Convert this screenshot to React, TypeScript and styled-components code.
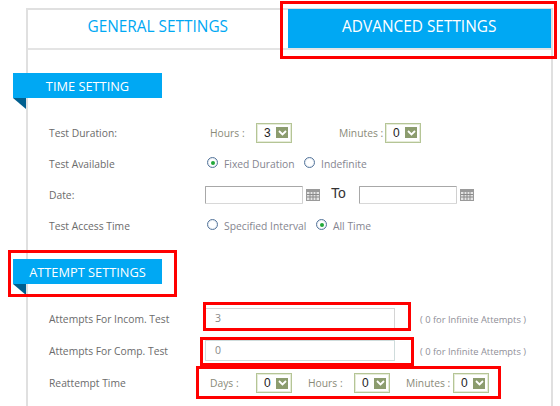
import React from "react";
import styled, { createGlobalStyle } from "styled-components";

const Global = createGlobalStyle`
  html, body { margin: 0; padding: 0; background: #fff; height: 406px; overflow: hidden; }
  body { font-family: "Open Sans", "Liberation Sans", sans-serif; color: #666; }
`;

const Page = styled.div`
  position: relative;
  width: 560px;
  height: 406px;
  overflow: hidden;
  padding: 8px 7px 0 26px;
  box-sizing: border-box;
`;
const Panel = styled.div`
  height: 398px;
  border: solid #e0e0e0;
  border-width: 2px 2px 0 2px;
  box-sizing: border-box;
`;
const Tabs = styled.div`
  display: flex;
  height: 39px;
  margin-top: -1px;
  border-bottom: 2px solid #e4e4e4;
`;
const Tab = styled.div<{ $active?: boolean }>`
  display: flex;
  align-items: center;
  justify-content: center;
  font-size: 15.4px;
  height: 39px;
  padding-bottom: 5px;
  box-sizing: border-box;
  width: ${(p) => (p.$active ? "264px" : "260px")};
  background: ${(p) => (p.$active ? "#00a8f3" : "transparent")};
  color: ${(p) => (p.$active ? "#fff" : "#00a8f3")};
`;
const Banner = styled.div<{ $top: number }>`
  position: relative;
  width: 149px;
  height: 25px;
  margin: ${(p) => p.$top}px 0 0 -15px;
  background: #00a8f3;
  color: #fff;
  font-size: 12.8px;
  display: flex;
  align-items: center;
  justify-content: center;
  &::after {
    content: "";
    position: absolute;
    left: 0;
    top: 25px;
    border-style: solid;
    border-width: 0 13px 11px 0;
    border-color: transparent #005f8f transparent transparent;
  }
`;
const Rows = styled.div<{ $top: number }>`
  margin-top: ${(p) => p.$top}px;
  display: flex;
  flex-direction: column;
`;
const Row = styled.div<{ $h?: number }>`
  display: flex;
  align-items: center;
  height: ${(p) => p.$h ?? 31}px;
  font-size: 10.3px;
  white-space: nowrap;
`;
const Label = styled.div`
  width: 156px;
  margin-left: 21px;
  flex: none;
  color: #6b6b6b;
`;
const Caption = styled.span<{ $w: number; $ml?: number }>`
  width: ${(p) => p.$w}px;
  margin-left: ${(p) => p.$ml ?? 0}px;
  flex: none;
  color: #8a8a78;
`;
const SelectBox = styled.div<{ $mr?: number }>`
  width: 36px;
  height: 20px;
  box-sizing: border-box;
  border: 1px solid #b5c596;
  outline: 1px solid #e6ecd9;
  outline-offset: -2px;
  display: flex;
  align-items: center;
  justify-content: space-between;
  padding: 0 3px 0 7px;
  margin-right: ${(p) => p.$mr ?? 0}px;
  color: #222;
  font-family: "Liberation Sans", sans-serif;
  font-size: 12px;
  flex: none;
`;
const Arrow = styled.span`
  width: 12px;
  height: 11px;
  background: #8c9c6e;
  display: flex;
  align-items: center;
  justify-content: center;
`;
const RadioWrap = styled.label<{ $w: number }>`
  display: flex;
  align-items: center;
  width: ${(p) => p.$w}px;
  flex: none;
  color: #85858f;
  gap: 6px;
`;
const RadioDot = styled.span<{ $on?: boolean }>`
  width: 11px;
  height: 11px;
  box-sizing: border-box;
  border-radius: 50%;
  border: 1px solid #54749a;
  background: #fff;
  box-shadow: inset 0 0 0 1px #e8eef4;
  margin: -2px 0 0 2px;
  flex: none;
  position: relative;
  &::after {
    content: "";
    display: ${(p) => (p.$on ? "block" : "none")};
    position: absolute;
    left: 2.5px;
    top: 2.5px;
    width: 4px;
    height: 4px;
    border-radius: 50%;
    background: #22a83a;
  }
`;
const DateInput = styled.div`
  width: 98px;
  height: 18px;
  box-sizing: border-box;
  border: 1px solid #a8a8a8;
  border-bottom-color: #d8d8d8;
  border-right-color: #d0d0d0;
  border-radius: 1px;
  flex: none;
`;
const CalendarSlot = styled.span`
  display: flex;
  margin-left: 3px;
  margin-top: 1px;
  flex: none;
`;
const ToText = styled.span`
  font-family: "Liberation Sans", sans-serif;
  font-size: 14px;
  color: #333;
  margin: -4px 13px 0 11px;
  flex: none;
`;
const TextField = styled.div<{ $tint?: boolean }>`
  width: 190px;
  height: 21px;
  box-sizing: border-box;
  border: 1px solid ${(p) => (p.$tint ? "#cfdcdc" : "#d4d4d4")};
  color: #888;
  font-size: 10.5px;
  padding-left: 9px;
  margin-top: -2px;
  display: flex;
  align-items: center;
  margin-right: 25px;
  flex: none;
`;
const Hint = styled.span`
  font-size: 9.35px;
  color: #8f8f98;
`;
const Highlight = styled.div<{ $x: number; $y: number; $w: number; $h: number }>`
  position: absolute;
  left: ${(p) => p.$x}px;
  top: ${(p) => p.$y}px;
  width: ${(p) => p.$w}px;
  height: ${(p) => p.$h}px;
  border: 3px solid #f00;
  box-sizing: border-box;
  pointer-events: none;
`;

const Chevron = () => (
  <svg width="9" height="6" viewBox="0 0 9 6">
    <path d="M1 1 L4.5 4.5 L8 1" fill="none" stroke="#fff" strokeWidth="1.8" />
  </svg>
);
const Calendar = () => (
  <svg width="14" height="12" viewBox="0 0 14 12">
    <rect x="0" y="0" width="14" height="12" fill="#9a9a9a" />
    <rect x="1" y="3" width="12" height="8" fill="#e4e4e4" />
    <path d="M4 3v8M7 3v8M10 3v8M1 5.5h12M1 8h12" stroke="#8a8a8a" strokeWidth="1" />
  </svg>
);
const Select = ({ value, mr }: { value: string; mr?: number }) => (
  <SelectBox $mr={mr}>
    {value}
    <Arrow>
      <Chevron />
    </Arrow>
  </SelectBox>
);
const Radio = ({ on, text, w }: { on?: boolean; text: string; w: number }) => (
  <RadioWrap $w={w}>
    <RadioDot $on={on} />
    {text}
  </RadioWrap>
);

export default function App() {
  return (
    <Page>
      <Global />
      <Panel>
        <Tabs>
          <Tab>GENERAL SETTINGS</Tab>
          <Tab $active>ADVANCED SETTINGS</Tab>
        </Tabs>
        <Banner $top={23}>TIME SETTING</Banner>
        <Rows $top={19}>
          <Row>
            <Label>Test Duration:</Label>
            <Caption $w={46} $ml={5}>Hours :</Caption>
            <Select value="3" mr={47} />
            <Caption $w={46}>Minutes :</Caption>
            <Select value="0" />
          </Row>
          <Row>
            <Label>Test Available</Label>
            <Radio on text="Fixed Duration" w={97} />
            <Radio text="Indefinite" w={90} />
          </Row>
          <Row>
            <Label>Date:</Label>
            <DateInput />
            <CalendarSlot>
              <Calendar />
            </CalendarSlot>
            <ToText>To</ToText>
            <DateInput />
            <CalendarSlot>
              <Calendar />
            </CalendarSlot>
          </Row>
          <Row>
            <Label>Test Access Time</Label>
            <Radio text="Specified Interval" w={109} />
            <Radio on text="All Time" w={70} />
          </Row>
        </Rows>
        <Banner $top={18}>ATTEMPT SETTINGS</Banner>
        <Rows $top={19}>
          <Row $h={32}>
            <Label>Attempts For Incom. Test</Label>
            <TextField>3</TextField>
            <Hint>( 0 for Infinite Attempts )</Hint>
          </Row>
          <Row $h={32}>
            <Label>Attempts For Comp. Test</Label>
            <TextField $tint>0</TextField>
            <Hint>( 0 for Infinite Attempts )</Hint>
          </Row>
          <Row $h={32}>
            <Label>Reattempt Time</Label>
            <Caption $w={46} $ml={5}>Days :</Caption>
            <Select value="0" mr={16} />
            <Caption $w={46}>Hours :</Caption>
            <Select value="0" mr={16} />
            <Caption $w={47}>Minutes :</Caption>
            <Select value="0" />
          </Row>
        </Rows>
      </Panel>
      <Highlight $x={280} $y={1} $w={277} $h={58} />
      <Highlight $x={8} $y={250} $w={169} $h={47} />
      <Highlight $x={203} $y={302} $w={208} $h={29} />
      <Highlight $x={200} $y={337} $w={214} $h={29} />
      <Highlight $x={196} $y={366} $w={305} $h={33} />
    </Page>
  );
}
